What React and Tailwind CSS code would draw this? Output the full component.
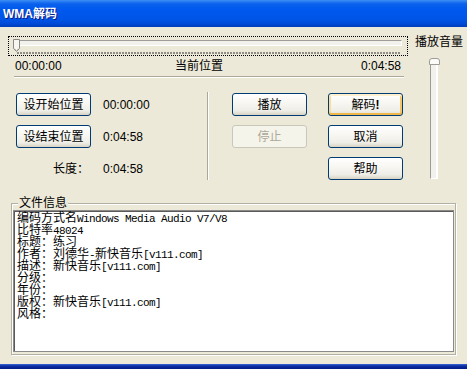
import React from "react";

function Mixed({ text }) {
  const parts = text.split(/([\x00-\x7F]+)/).filter(Boolean);
  return parts.map((p, i) =>
    /^[\x00-\x7F]+$/.test(p) ? (
      <span
        key={i}
        className="font-[family-name:'Liberation_Mono',monospace] text-[11px] tracking-[-0.6px]"
      >
        {p}
      </span>
    ) : (
      <span key={i}>{p}</span>
    )
  );
}

function XPButton({ children, variant = "normal" }) {
  const base =
    "w-[75px] h-[23px] shrink-0 rounded-[3px] border text-[12px] leading-none flex items-center justify-center";
  if (variant === "disabled") {
    return (
      <div className={base + " border-[#C9C7BA] bg-[#F5F4EA] text-[#ACA899]"}>
        {children}
      </div>
    );
  }
  if (variant === "default") {
    return (
      <div
        className={
          base +
          " border-[#003C74] text-black bg-[linear-gradient(180deg,#FFFFFF_0%,#F7F6F1_45%,#EEEDE6_80%,#E2DDCF_100%)] shadow-[inset_0_2px_0_#FFF0CF,inset_0_-2px_0_#F0B84A,inset_2px_0_0_#FCDC9A,inset_-2px_0_0_#F5C668]"
        }
      >
        {children}
      </div>
    );
  }
  return (
    <div
      className={
        base +
        " border-[#003C74] text-black bg-[linear-gradient(180deg,#FFFFFF_0%,#F7F6F1_45%,#EEEDE6_80%,#D8D2C4_100%)]"
      }
    >
      {children}
    </div>
  );
}

const infoLines = [
  "编码方式名Windows Media Audio V7/V8",
  "比特率48024",
  "标题：练习",
  "作者：刘德华-新快音乐[v111.com]",
  "描述：新快音乐[v111.com]",
  "分级：",
  "年份：",
  "版权：新快音乐[v111.com]",
  "风格：",
];

export default function App() {
  return (
    <div className="w-[467px] h-[369px] overflow-hidden bg-[#ECE9D8] flex flex-col font-[family-name:'Liberation_Sans','Noto_Sans_CJK_SC',sans-serif] text-black">
      {/* Title bar */}
      <div className="h-[27px] shrink-0 flex items-center pl-[3px] bg-[linear-gradient(180deg,#3D8EF6_0%,#0B62EC_14%,#0058EE_35%,#0055E8_70%,#004AD6_88%,#003DBA_100%)]">
        <span className="text-white text-[12px] font-bold leading-none [text-shadow:1px_1px_0_#0A1883]">
          WMA解码
        </span>
      </div>

      {/* Body */}
      <div className="flex-1 flex flex-col">
        <div className="flex h-[153px] shrink-0">
          {/* Left column */}
          <div className="w-[412px] flex flex-col">
            {/* Position slider */}
            <div className="relative mt-[9px] ml-[8px] w-[400px] h-[20px] border border-dotted border-black">
              <div className="mt-[3px] ml-[5px] w-[388px] h-[6px] border-t border-l border-[#9D9C99] border-b border-r border-b-white border-r-white bg-[#F2F1EB]" />
              <div className="mt-[6px] ml-[8px] w-[383px] h-[2px] bg-[repeating-linear-gradient(90deg,#8E8D88_0px,#8E8D88_2px,transparent_2px,transparent_3px)]" />
              <svg
                className="absolute left-[4px] top-[2px]"
                width="8"
                height="14"
                viewBox="0 0 8 14"
              >
                <path
                  d="M0.5 0.5 H6.5 V9.5 L3.5 12.5 L0.5 9.5 Z"
                  fill="#F6F5F0"
                  stroke="#8A8985"
                  strokeWidth="1"
                />
                <path d="M1.5 9.5 L3.5 11.5 L5.5 9.5" fill="none" stroke="#C8C6BB" strokeWidth="1" />
              </svg>
            </div>

            {/* Position labels */}
            <div className="mt-[4px] ml-[15px] w-[386px] h-[12px] flex text-[12px] leading-[12px]">
              <span className="w-[160px]">00:00:00</span>
              <span>当前位置</span>
              <span className="flex-1 text-right">0:04:58</span>
            </div>

            {/* Separator */}
            <div className="mt-[4px] ml-[14px] w-[390px] h-[2px] border-t border-[#ACA899] border-b border-b-white" />

            {/* Buttons area */}
            <div className="mt-[15px] h-[87px] flex">
              <div className="w-[207px] pl-[16px] flex flex-col gap-[9px]">
                <div className="flex items-center gap-[12px] h-[23px]">
                  <XPButton>设开始位置</XPButton>
                  <span className="text-[12px] leading-none">00:00:00</span>
                </div>
                <div className="flex items-center gap-[12px] h-[23px]">
                  <XPButton>设结束位置</XPButton>
                  <span className="text-[12px] leading-none">0:04:58</span>
                </div>
                <div className="flex items-center gap-[12px] h-[23px]">
                  <span className="w-[75px] text-right pr-[2px] text-[12px] leading-none">长度：</span>
                  <span className="text-[12px] leading-none">0:04:58</span>
                </div>
              </div>
              <div className="w-[2px] -mt-[1px] h-[88px] border-l border-[#ACA899] border-r border-r-white" />
              <div className="ml-[23px] flex gap-[21px]">
                <div className="flex flex-col gap-[9px]">
                  <XPButton>播放</XPButton>
                  <XPButton variant="disabled">停止</XPButton>
                </div>
                <div className="flex flex-col gap-[9px]">
                  <XPButton variant="default">
                    解码<span className="font-bold">!</span>
                  </XPButton>
                  <XPButton>取消</XPButton>
                  <XPButton>帮助</XPButton>
                </div>
              </div>
            </div>
          </div>

          {/* Volume column */}
          <div className="w-[55px] flex flex-col">
            <div className="mt-[9px] ml-[3px] h-[12px] text-[12px] leading-[12px] whitespace-nowrap">
              播放音量
            </div>
            <div className="relative mt-[10px] ml-[17px] w-[11px] h-[121px]">
              <div className="mt-[3px] ml-[1px] w-[8px] h-[118px] border-l border-[#9D9C99] border-r-2 border-r-white border-b border-b-white bg-[#F2F1EB]" />
              <div className="absolute left-0 top-0 w-[11px] h-[7px] rounded-t-[3px] border border-[#9D9C99] bg-[#FBFBF8]" />
            </div>
          </div>
        </div>

        {/* File info group box */}
        <div className="relative mt-[23px] ml-[11px] w-[445px] h-[152px] border border-[#B2B0A2] shadow-[inset_1px_1px_0_#FFFFFF,1px_1px_0_#FFFFFF]">
          <span className="absolute left-[6px] -top-[7px] px-[1px] bg-[#ECE9D8] text-[12px] leading-[12px]">
            文件信息
          </span>
          <div className="mt-[6px] ml-[1px] w-[441px] h-[142px] bg-white border border-[#8A8A8A] shadow-[inset_1px_1px_0_#5A5A5A] pl-[3px] pt-[1px] text-[12px] leading-[12px]">
            {infoLines.map((l, i) => (
              <div key={i} className="h-[12px] whitespace-pre">
                <Mixed text={l} />
              </div>
            ))}
          </div>
        </div>
      </div>

      {/* Window bottom frame */}
      <div className="h-[5px] shrink-0 bg-[linear-gradient(180deg,#3A66D8_0%,#0C2FA4_40%,#001B86_100%)]" />
    </div>
  );
}
